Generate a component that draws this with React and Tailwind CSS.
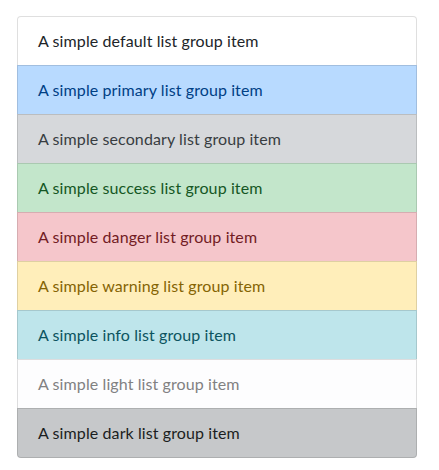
const items = [
  { label: 'default', cls: 'bg-white text-[#212529]' },
  { label: 'primary', cls: 'bg-[#b8daff] text-[#004085]' },
  { label: 'secondary', cls: 'bg-[#d6d8db] text-[#383d41]' },
  { label: 'success', cls: 'bg-[#c3e6cb] text-[#155724]' },
  { label: 'danger', cls: 'bg-[#f5c6cb] text-[#721c24]' },
  { label: 'warning', cls: 'bg-[#ffeeba] text-[#856404]' },
  { label: 'info', cls: 'bg-[#bee5eb] text-[#0c5460]' },
  { label: 'light', cls: 'bg-[#fdfdfe] text-[#818182]' },
  { label: 'dark', cls: 'bg-[#c6c8ca] text-[#1b1e21]' },
];

export default function App() {
  return (
    <div className="min-h-[470px] bg-white pt-4 pl-[17px] font-['Lato','Open_Sans',sans-serif]">
      <ul className="flex w-[400px] flex-col">
        {items.map((item, i) => (
          <li
            key={item.label}
            className={`-mb-px border border-black/[0.125] px-5 py-3 text-base leading-6 tracking-[0.1px] ${item.cls} ${
              i === 0 ? 'rounded-t' : ''
            } ${i === items.length - 1 ? 'rounded-b' : ''}`}
          >
            A simple {item.label} list group item
          </li>
        ))}
      </ul>
    </div>
  );
}
